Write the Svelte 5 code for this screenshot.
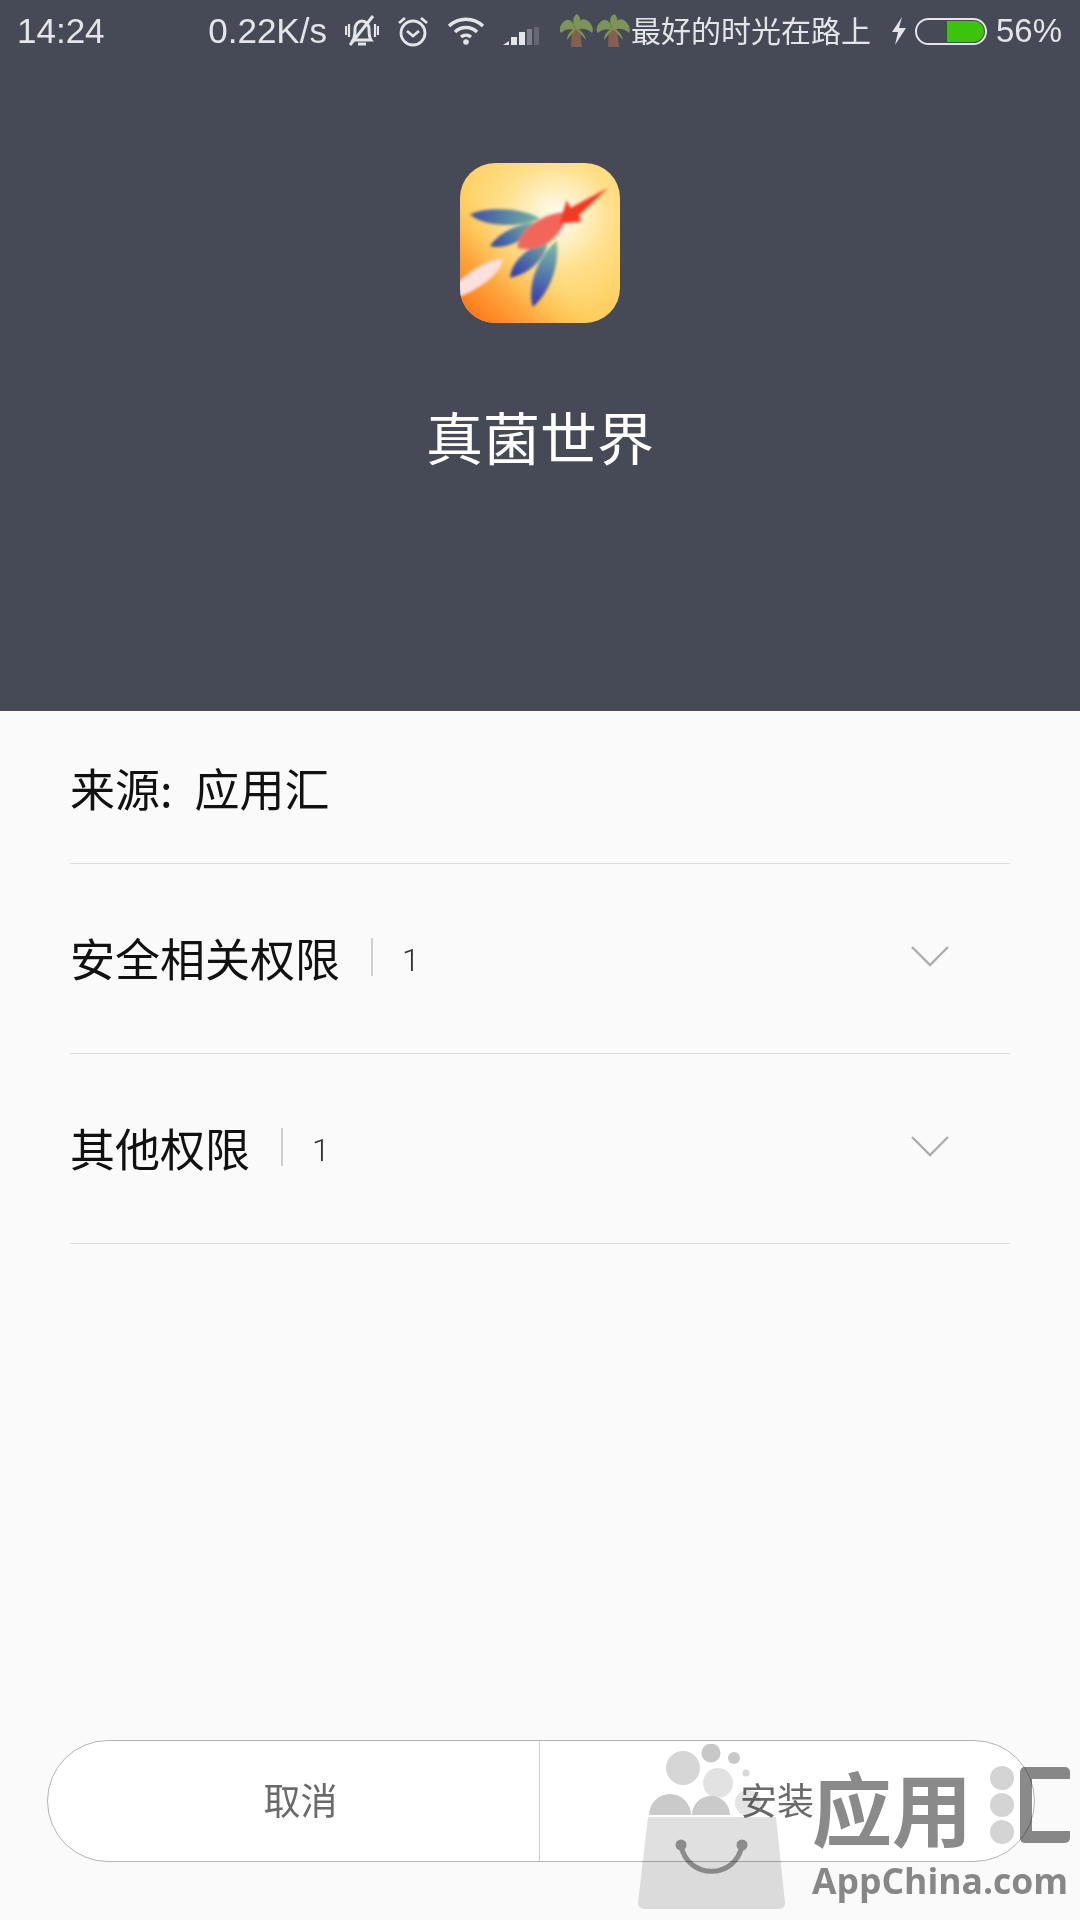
<script>
  const groups = [
    { name: '安全相关权限', count: 1 },
    { name: '其他权限', count: 1 }
  ];
</script>

<div class="page">
  <header class="hero">
    <div class="status">
      <span class="time">14:24</span>
      <div class="status-right">
        <span class="speed">0.22K/s</span>
        <svg class="ic bell" viewBox="0 0 34 32" fill="none" stroke="#e4e5e8" stroke-width="3">
          <path d="M8 25c2-3 2-8 2-11 0-4 3-8 7-8s7 4 7 8c0 3 0 8 2 11z" />
          <path d="M13 29h8" />
          <path d="M1 11v9M4 9v13M33 11v9M30 9v13" stroke-width="2.200" />
          <path d="M28 1 5 30" />
        </svg>
        <svg class="ic alarm" viewBox="0 0 32 32" fill="none" stroke="#e4e5e8" stroke-width="2.800">
          <circle cx="16" cy="18" r="12" />
          <path d="M10 16l6 5 6-5" />
          <path d="M2 8l6-5M30 8l-6-5" />
        </svg>
        <svg class="ic wifi" viewBox="0 0 38 28" fill="none" stroke="#e4e5e8" stroke-width="3.400">
          <path d="M2 9c10-9 24-9 34 0" />
          <path d="M8 15c6-6 16-6 22 0" />
          <path d="M14 20c3-2.500 7-2.500 10 0" />
          <circle cx="19" cy="25" r="2.800" fill="#e4e5e8" stroke="none" />
        </svg>
        <svg class="ic signal" viewBox="0 0 37 18">
          <path d="M0 18 6 14v4z" fill="#e4e5e8" />
          <rect x="8" y="10" width="6" height="8" fill="#e4e5e8" />
          <rect x="16" y="5" width="6" height="13" fill="#e4e5e8" />
          <rect x="24" y="2" width="5" height="16" fill="#7c7f88" />
          <rect x="31" y="0" width="5" height="18" fill="#656873" />
        </svg>
        <svg class="ic palms" viewBox="0 0 70 34">
          {#each [0, 37] as shift}
            <g transform="translate({shift} 0)">
              <path d="M12 15h8l2 18H11z" fill="#85604e" />
              <path d="M16 16C12 3 5 3 0 13c-1 3 0 5 1 6 5-5 10-4 15-3zM16 16C19 2 27 3 32 12c1 3 1 5 0 7-5-5-11-5-16-3zM16 16C12 9 12 3 17 0c5 3 4 10-1 16zM16 15c-5 1-9 5-9 11 3-4 6-7 9-11zM16 15c5 1 9 5 10 11-3-4-7-7-10-11z" fill="#7d9358" />
            </g>
          {/each}
        </svg>
        <span class="song">最好的时光在路上</span>
        <svg class="ic bolt" viewBox="0 0 16 28">
          <path d="M11 0 1 15h6L4 28 15 11H8z" fill="#e4e5e8" />
        </svg>
        <div class="battery"><div class="charge"></div></div>
        <span class="pct">56%</span>
      </div>
    </div>

    <svg class="app-icon" viewBox="60 38 480 480">
      <defs>
        <clipPath id="tile"><rect x="60" y="38" width="480" height="480" rx="105" /></clipPath>
        <radialGradient id="glow" gradientUnits="userSpaceOnUse" cx="350" cy="200" r="380">
          <stop offset="0" stop-color="#fffdf4" />
          <stop offset="0.16" stop-color="#fff3cf" />
          <stop offset="0.42" stop-color="#ffe08c" />
          <stop offset="0.75" stop-color="#ffd268" />
          <stop offset="1" stop-color="#ffc850" />
        </radialGradient>
        <linearGradient id="ember" gradientUnits="userSpaceOnUse" x1="70" y1="510" x2="280" y2="300">
          <stop offset="0" stop-color="#ff6a14" />
          <stop offset="0.5" stop-color="#ff9a30" stop-opacity="0.75" />
          <stop offset="1" stop-color="#ffc850" stop-opacity="0" />
        </linearGradient>
        <linearGradient id="leafA" gradientUnits="userSpaceOnUse" x1="95" y1="190" x2="290" y2="205">
          <stop offset="0" stop-color="#3a52a8" />
          <stop offset="1" stop-color="#74b0a0" />
        </linearGradient>
        <linearGradient id="leafB" gradientUnits="userSpaceOnUse" x1="155" y1="285" x2="270" y2="225">
          <stop offset="0" stop-color="#3248a8" />
          <stop offset="1" stop-color="#70a8a0" />
        </linearGradient>
        <linearGradient id="leafC" gradientUnits="userSpaceOnUse" x1="215" y1="378" x2="320" y2="280">
          <stop offset="0" stop-color="#3238b0" />
          <stop offset="1" stop-color="#70a8a0" />
        </linearGradient>
        <linearGradient id="leafD" gradientUnits="userSpaceOnUse" x1="280" y1="465" x2="345" y2="275">
          <stop offset="0" stop-color="#3238b0" />
          <stop offset="1" stop-color="#7cc0a4" />
        </linearGradient>
        <filter id="soft" x="-20%" y="-20%" width="140%" height="140%"><feGaussianBlur stdDeviation="5" /></filter>
      </defs>
      <g clip-path="url(#tile)">
        <rect x="60" y="38" width="480" height="480" fill="url(#glow)" />
        <rect x="60" y="38" width="480" height="480" fill="url(#ember)" />
        <g filter="url(#soft)">
          <path d="M55 395C100 355 150 325 190 325 180 375 110 420 55 440z" fill="#fbe0e0" />
          <path d="M90 192C140 168 250 172 300 205 240 232 130 232 90 192z" fill="url(#leafA)" />
          <path d="M150 288C175 245 240 218 295 215 275 262 205 298 150 288z" fill="url(#leafB)" />
          <path d="M210 382C215 330 265 290 325 270 315 330 265 372 210 382z" fill="url(#leafC)" />
          <path d="M278 470C260 400 295 320 350 270 360 345 330 425 278 470z" fill="url(#leafD)" />
          <path d="M232 292C235 240 305 190 375 185 385 245 305 315 232 292z" fill="#f2665a" />
          <path d="M362 208 380 150 392 172 505 112 418 195 424 214 358 220z" fill="#f03a20" />
        </g>
      </g>
    </svg>
    <h1 class="app-name">真菌世界</h1>
  </header>

  <main class="details">
    <div class="row source"><span>来源:</span><span class="source-value">应用汇</span></div>
    {#each groups as group}
      <div class="row group">
        <span class="group-name">{group.name}</span>
        <span class="count"><span class="count-num">{group.count}</span></span>
        <svg class="chevron" viewBox="0 0 38 22" fill="none" stroke="#adadad" stroke-width="2.400">
          <path d="M1 2l18 18L37 2" />
        </svg>
      </div>
    {/each}
  </main>

  <footer class="actions">
    <button class="action first">取消</button>
    <button class="action second">安装</button>
  </footer>

  <!-- AppChina corner mark, laid over the page -->
  <div class="mark">
    <svg class="mark-bag" viewBox="0 0 150 170">
      <circle cx="45" cy="24" r="17" fill="#d6d6d6" />
      <circle cx="73" cy="9" r="9.500" fill="#c8c8c8" />
      <circle cx="96" cy="14" r="6" fill="#c8c8c8" />
      <circle cx="108" cy="29" r="3.500" fill="#d8d8d8" />
      <circle cx="80" cy="39" r="15" fill="#e2e2e2" />
      <circle cx="110" cy="59" r="13" fill="#e4e4e4" />
      <path d="M11 71a21 21 0 1 1 42 0z" fill="#cacaca" />
      <path d="M54 71a19 19 0 1 1 38 0z" fill="#cacaca" />
      <path d="M10 73h128l9 86c0 4-3 6-7 6H7c-4 0-7-2-7-6z" fill="#e0e0e0" />
      <path d="M43 101c6 35 55 35 61 0" fill="none" stroke="#8c8c8c" stroke-width="5" />
      <circle cx="43" cy="101" r="5.500" fill="#8c8c8c" />
      <circle cx="104" cy="101" r="5.500" fill="#8c8c8c" />
    </svg>
    <div class="mark-text">
      <div class="mark-cn">
        <span>应用</span>
        <div class="mark-dots"><i></i><i></i><i></i></div>
        <div class="mark-bracket"></div>
      </div>
      <div class="mark-en">AppChina.com</div>
    </div>
  </div>
</div>

<style>
  :global(body) {
    margin: 0;
    background: #fafafa;
  }

  .page {
    position: relative;
    display: flex;
    flex-direction: column;
    width: 1080px;
    height: 1920px;
    overflow: hidden;
    background: #fafafa;
    font-family: "Noto Sans CJK SC", "Liberation Sans", sans-serif;
  }

  .hero {
    display: flex;
    flex-direction: column;
    align-items: center;
    height: 711px;
    background: #464a56;
    flex: none;
  }

  .status {
    display: flex;
    align-items: center;
    justify-content: space-between;
    box-sizing: border-box;
    width: 100%;
    height: 62px;
    padding: 0 18px 0 17px;
    color: #e4e5e8;
    font-family: "Liberation Sans", sans-serif;
    font-size: 35px;
  }

  .status-right {
    display: flex;
    align-items: center;
  }

  .ic {
    display: block;
    flex: none;
  }

  .bell { width: 34px; height: 32px; margin-left: 18px; }
  .alarm { width: 32px; height: 32px; margin-left: 18px; }
  .wifi { width: 38px; height: 28px; margin-left: 18px; }
  .signal { width: 37px; height: 18px; margin: 10px 0 0 18px; }
  .palms { width: 70px; height: 34px; margin-left: 20px; }
  .bolt { width: 16px; height: 28px; margin-left: 20px; }

  .song {
    margin: -4px 0 0 1px;
    font-family: "Noto Sans CJK SC", sans-serif;
    font-size: 30px;
    line-height: 36px;
  }

  .battery {
    box-sizing: border-box;
    width: 72px;
    height: 27px;
    margin-left: 8px;
    padding: 1px;
    border: 2.500px solid #e4e5e8;
    border-radius: 14px;
    display: flex;
    justify-content: flex-end;
  }

  .charge {
    width: 37px;
    height: 100%;
    background: #3cc40a;
    border-radius: 0 10px 10px 0;
  }

  .pct {
    margin-left: 9px;
    font-size: 33px;
  }

  .app-icon {
    display: block;
    width: 160px;
    height: 160px;
    margin-top: 101px;
  }

  .app-name {
    margin: 74px 0 0;
    color: #fff;
    font-size: 57px;
    font-weight: 400;
    line-height: 76px;
  }

  .details {
    flex: 1;
    padding: 0 70px;
  }

  .row {
    box-sizing: border-box;
    display: flex;
    align-items: center;
    border-bottom: 1px solid #dcdcdc;
    color: #111;
    font-size: 45px;
  }

  .source {
    height: 153px;
  }

  .source-value {
    margin-left: 22px;
  }

  .group {
    height: 190px;
    padding-bottom: 3px;
  }

  .count {
    display: flex;
    align-items: center;
    height: 38px;
    margin-left: 31px;
    padding-left: 29px;
    border-left: 2px solid #cfcfcf;
    color: #333;
    font-family: Roboto, sans-serif;
    font-size: 32px;
    font-weight: 300;
  }

  .count-num {
    margin-top: 5px;
  }

  .chevron {
    width: 38px;
    height: 22px;
    margin: -2px 61px 0 auto;
  }

  .actions {
    display: flex;
    box-sizing: border-box;
    flex: none;
    width: 988px;
    height: 122px;
    margin: 0 0 58px 47px;
    overflow: hidden;
    background: #fff;
    border: 1px solid #b4b4b4;
    border-radius: 61px;
  }

  .action {
    padding: 0 0 4px;
    background: none;
    border: 0;
    color: #6a6a6a;
    font-family: "Noto Sans CJK SC", sans-serif;
    font-size: 37px;
  }

  .first {
    flex: none;
    width: 491px;
    padding-left: 14px;
  }

  .second {
    flex: 1;
    border-left: 1px solid #d0d0d0;
    padding-right: 20px;
  }

  .mark {
    position: absolute;
    left: 638px;
    top: 1744px;
    display: flex;
    align-items: flex-start;
    mix-blend-mode: multiply;
  }

  .mark-bag {
    display: block;
    width: 150px;
    height: 170px;
  }

  .mark-text {
    margin: 16px 0 0 24px;
    color: #8a8a8a;
  }

  .mark-cn {
    display: flex;
    align-items: center;
    height: 90px;
    font-size: 80px;
    font-weight: 700;
    line-height: 90px;
  }

  .mark-dots {
    display: flex;
    flex-direction: column;
    gap: 3px;
    margin: 0 6px 0 18px;
  }

  .mark-dots i {
    display: block;
    width: 24px;
    height: 24px;
    border-radius: 50%;
    background: #d4d4d4;
  }

  .mark-bracket {
    box-sizing: border-box;
    width: 50px;
    height: 76px;
    border: 12px solid #8a8a8a;
    border-right: 0;
    border-radius: 5px;
  }

  .mark-en {
    margin-top: 10px;
    font-family: "Open Sans", sans-serif;
    font-size: 35.500px;
    font-weight: 700;
    line-height: 40px;
    white-space: nowrap;
  }
</style>
